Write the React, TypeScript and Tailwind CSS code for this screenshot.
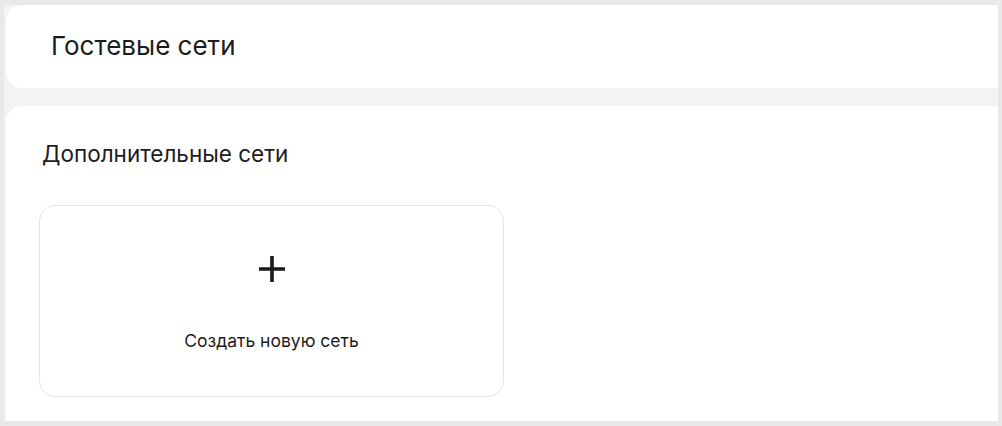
export default function App() {
  return (
    <div
      className="w-[1002px] h-[426px] bg-[#e9e9e9] pt-[5px] pl-[4px] pr-[4px] pb-[5px] overflow-hidden"
      style={{ fontFamily: 'Inter, "Noto Sans", sans-serif' }}
    >
      <div className="h-full bg-[#f3f3f3] pl-[2px] flex flex-col">
        <div className="h-[83px] shrink-0 bg-white rounded-l-[16px] flex items-center pl-[45px]">
          <h1 className="text-[26px] text-[#1c1c1c] leading-none -mt-[2px]">Гостевые сети</h1>
        </div>
        <div className="mt-[18px] flex-1 bg-white rounded-tl-[16px] pl-[36px] pt-[37px]">
          <h2 className="text-[22.5px] text-[#1c1c1c] leading-none">Дополнительные сети</h2>
          <button className="mt-[39px] -ml-[3px] w-[465px] h-[192px] rounded-[16px] border border-[#e6e6e6] bg-white flex flex-col items-center">
            <svg width="26" height="26" viewBox="0 0 26 26" className="mt-[50px]">
              <path d="M13 0v26M0 13h26" stroke="#1a1a1a" strokeWidth="3.6" />
            </svg>
            <span className="mt-[50px] text-[17.5px] text-[#1c1c1c] leading-none">Создать новую сеть</span>
          </button>
        </div>
      </div>
    </div>
  )
}
